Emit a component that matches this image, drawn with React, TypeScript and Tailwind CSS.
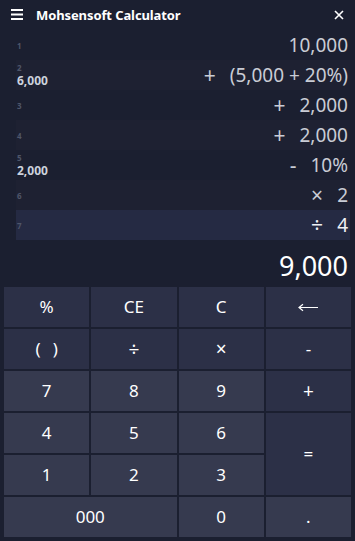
import React from "react";

const rows: { n: number; op?: string; text: string; sub?: string; active?: boolean }[] = [
  { n: 1, text: "10,000" },
  { n: 2, op: "+", text: "(5,000 + 20%)", sub: "6,000" },
  { n: 3, op: "+", text: "2,000" },
  { n: 4, op: "+", text: "2,000" },
  { n: 5, op: "-", text: "10%", sub: "2,000" },
  { n: 6, op: "×", text: "2" },
  { n: 7, op: "÷", text: "4", active: true },
];

type Key = { label: string; num?: boolean; cls?: string };
const keys: Key[] = [
  { label: "%" },
  { label: "CE" },
  { label: "C" },
  { label: "←" },
  { label: "()" },
  { label: "÷" },
  { label: "×" },
  { label: "-" },
  { label: "7", num: true },
  { label: "8", num: true },
  { label: "9", num: true },
  { label: "+" },
  { label: "4", num: true },
  { label: "5", num: true },
  { label: "6", num: true },
  { label: "=", cls: "row-span-2" },
  { label: "1", num: true },
  { label: "2", num: true },
  { label: "3", num: true },
  { label: "000", num: true, cls: "col-span-2" },
  { label: "0", num: true },
  { label: ".", num: true },
];

function KeyLabel({ label }: { label: string }) {
  if (label === "←")
    return (
      <svg width="20" height="9" viewBox="0 0 20 9">
        <path d="M1 4.5 H20 M5 1.2 L1 4.5 L5 7.8" stroke="#fff" strokeWidth="1.2" fill="none" />
      </svg>
    );
  if (label === "()")
    return (
      <span className="flex gap-[12px]">
        <span>(</span>
        <span>)</span>
      </span>
    );
  if (label === "÷" || label === "×" || label === "+") return <span className="text-[19px]">{label}</span>;
  return <>{label}</>;
}

export default function App() {
  return (
    <div
      className="w-[355px] h-[541px] bg-[#1b1f30] text-white flex flex-col overflow-hidden"
      style={{ fontFamily: '"Noto Sans", "Open Sans", sans-serif' }}
    >
      {/* title bar */}
      <div className="h-[30px] flex items-center shrink-0">
        <svg width="12" height="11" viewBox="0 0 12 11" className="ml-[11px] mt-[-1px]">
          <rect x="0" y="0" width="12" height="2" fill="#fff" />
          <rect x="0" y="4.5" width="12" height="2" fill="#fff" />
          <rect x="0" y="9" width="12" height="2" fill="#fff" />
        </svg>
        <div className="ml-[13px] text-[13px] font-bold tracking-[-0.1px] leading-none">
          Mohsensoft Calculator
        </div>
        <svg width="10" height="10" viewBox="0 0 10 10" className="ml-auto mr-[11px]">
          <path d="M1 1 L9 9 M9 1 L1 9" stroke="#fff" strokeWidth="1.6" />
        </svg>
      </div>

      {/* expression rows */}
      <div className="pl-[16px] pr-[5px] flex flex-col shrink-0">
        {rows.map((r) => (
          <div
            key={r.n}
            className={
              "h-[30px] flex items-center pr-[2px] " +
              (r.active ? "bg-[#252a43]" : r.n % 2 === 0 ? "bg-[#1e2132]" : "bg-[#1b1f30]")
            }
          >
            <div className="flex flex-col justify-center pl-[1px] w-[60px]">
              <div className="text-[8px] font-bold leading-[9px] text-[#4f566a]">{r.n}</div>
              {r.sub && (
                <div className="text-[12px] font-bold leading-[12px] mt-[3px] text-[#ccd2dd]">
                  {r.sub}
                </div>
              )}
            </div>
            <div
              className={
                "ml-auto flex items-center text-[19px] leading-none " +
                (r.active ? "text-[#eef0f5]" : "text-[#c9ccd5]")
              }
            >
              {r.op && <span className="mr-[14px] text-[21px]">{r.op}</span>}
              <span>{r.text}</span>
            </div>
          </div>
        ))}
      </div>

      {/* result */}
      <div className="h-[47px] flex items-center justify-end pr-[7px] shrink-0">
        <div className="text-[27px] leading-none mt-[3px]">9,000</div>
      </div>

      {/* keypad */}
      <div className="grid grid-cols-4 grid-rows-[repeat(6,40px)] gap-[2px] px-[4px]">
        {keys.map((k) => (
          <div
            key={k.label}
            className={
              "flex items-center justify-center text-[17px] text-white " +
              (k.num ? "bg-[#363a4f] " : "bg-[#2c3047] ") +
              (k.cls ?? "")
            }
          >
            <KeyLabel label={k.label} />
          </div>
        ))}
      </div>
    </div>
  );
}
